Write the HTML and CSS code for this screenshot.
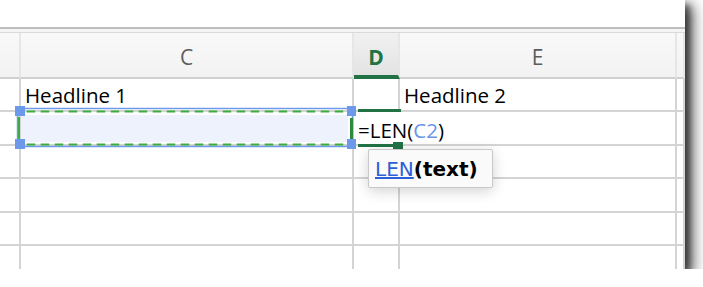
FILE: index.html
```html
<!DOCTYPE html>
<html lang="en">

<head>
    <meta charset="UTF-8">
    <meta name="viewport" content="width=device-width, initial-scale=1.0">
    <title>LEN formula</title>
    <link rel="stylesheet" href="styles.css">
</head>

<body>
    <div class="sheet">
        <div class="topbar"></div>
        <div class="rule"></div>

        <div class="colheads">
            <div class="hcell"></div>
            <div class="hcell">C</div>
            <div class="hcell active">D</div>
            <div class="hcell">E</div>
            <div class="hcell"></div>
        </div>

        <div class="row short">
            <div class="cell"></div>
            <div class="cell">Headline 1</div>
            <div class="cell"></div>
            <div class="cell">Headline 2</div>
            <div class="cell"></div>
        </div>
        <div class="row tall">
            <div class="cell"></div>
            <div class="cell"></div>
            <div class="cell"></div>
            <div class="cell"></div>
            <div class="cell"></div>
        </div>
        <div class="row short">
            <div class="cell"></div>
            <div class="cell"></div>
            <div class="cell"></div>
            <div class="cell"></div>
            <div class="cell"></div>
        </div>
        <div class="row tall">
            <div class="cell"></div>
            <div class="cell"></div>
            <div class="cell"></div>
            <div class="cell"></div>
            <div class="cell"></div>
        </div>
        <div class="row short">
            <div class="cell"></div>
            <div class="cell"></div>
            <div class="cell"></div>
            <div class="cell"></div>
            <div class="cell"></div>
        </div>
        <div class="row tall">
            <div class="cell"></div>
            <div class="cell"></div>
            <div class="cell"></div>
            <div class="cell"></div>
            <div class="cell"></div>
        </div>

        <!-- in-cell editor for D2 -->
        <div class="editor">=LEN(<span class="ref">C2</span>)</div>

        <!-- range highlight + copy marquee + active cell -->
        <svg class="marks" width="685" height="269" viewBox="0 0 685 269">
            <rect x="21" y="115" width="327" height="27" fill="#eef2fd" />
            <rect x="17.5" y="108.5" width="335" height="38" fill="none" stroke="#6f9aea" stroke-width="1.5" />
            <line x1="19" y1="111.5" x2="351" y2="111.5" stroke="#3aad3e" stroke-width="2" stroke-dasharray="8.5 5.5" stroke-dashoffset="6.3" />
            <line x1="19" y1="144.5" x2="351" y2="144.5" stroke="#3aad3e" stroke-width="2" stroke-dasharray="8.5 5.5" stroke-dashoffset="6.3" />
            <rect x="18" y="117" width="2" height="22" fill="#3aad3e" />

            <rect x="358" y="109" width="43" height="3" fill="#217346" />
            <rect x="358" y="144" width="35" height="3" fill="#217346" />
            <rect x="350" y="118" width="3" height="21" fill="#2d8a3c" />
            <rect x="393" y="142" width="10" height="9" fill="#217346" />

            <rect x="15" y="106" width="10" height="10" fill="#6d99ea" />
            <rect x="15" y="139" width="10" height="10" fill="#6d99ea" />
            <rect x="347" y="106" width="9" height="10" fill="#6d99ea" />
            <rect x="347" y="139" width="9" height="10" fill="#6d99ea" />
        </svg>

        <div class="tip">
            <span class="fn">LEN</span><b>(text)</b>
        </div>
    </div>
</body>

</html>
```

FILE: styles.css
```css
body {
    margin: 0;
    background-color: #ffffff;
    overflow: hidden;
}

.sheet {
    position: relative;
    width: 685px;
    height: 269px;
    overflow: hidden;
    background-color: #ffffff;
    box-shadow: 6px 6px 14px 1px rgba(0, 0, 0, 0.75), 5px 5px 5px rgba(0, 0, 0, 0.35);
    font-family: "Open Sans", "Noto Sans", sans-serif;
}

.topbar {
    height: 27px;
    border-bottom: 2px solid #bdbdbd;
}

.rule {
    height: 3px;
    background-color: #f4f4f4;
    border-bottom: 1px solid #dadada;
}

.colheads,
.row {
    display: grid;
    grid-template-columns: 21px 333px 46px 277px 8px;
}

.hcell {
    box-sizing: border-box;
    height: 46px;
    padding-top: 3px;
    display: flex;
    align-items: center;
    justify-content: center;
    background: linear-gradient(#f9f9f9, #f2f2f2);
    border-right: 2px solid #e6e6e6;
    border-bottom: 2px solid #d0d0d0;
    color: #5c5c5c;
    font-size: 21px;
}

.hcell.active {
    background: linear-gradient(#f1f1f1, #e3e3e3);
    border-bottom: 4px solid #217346;
    padding-top: 5px;
    color: #217346;
    font-weight: bold;
}

.row.short {
    height: 33px;
}

.row.tall {
    height: 34px;
}

.cell {
    box-sizing: border-box;
    display: flex;
    align-items: flex-end;
    padding: 0 0 1px 4px;
    border-right: 2px solid #d4d4d4;
    border-bottom: 2px solid #d4d4d4;
    font-size: 20.5px;
    color: #000000;
    white-space: nowrap;
}

.editor {
    position: absolute;
    left: 355px;
    top: 112px;
    width: 97px;
    height: 32px;
    box-sizing: border-box;
    padding-left: 3px;
    display: flex;
    align-items: flex-end;
    background-color: #ffffff;
    font-size: 20.5px;
    color: #000000;
    white-space: nowrap;
}

.editor .ref {
    color: #6a95e6;
}

.marks {
    position: absolute;
    left: 0;
    top: 0;
    pointer-events: none;
}

.tip {
    position: absolute;
    left: 368px;
    top: 149px;
    width: 125px;
    height: 39px;
    box-sizing: border-box;
    padding: 1px 0 0 6px;
    display: flex;
    align-items: center;
    background-color: #fafafa;
    border: 1px solid #c8c8c8;
    border-radius: 2px;
    box-shadow: 0 3px 14px rgba(0, 0, 0, 0.18);
    font-family: "DejaVu Sans", sans-serif;
    font-size: 20px;
    white-space: nowrap;
}

.tip .fn {
    color: #2a5fd8;
    text-decoration: underline;
}

.tip b {
    color: #000000;
}
```
